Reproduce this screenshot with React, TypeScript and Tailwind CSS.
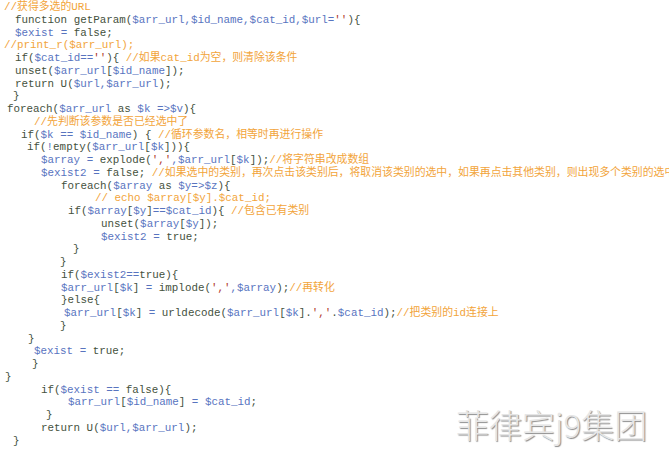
import React from "react";

type Line = { pl: string; text: string };

const lines: Line[] = [
  { pl: "pl-[4px]", text: "//获得多选的URL" },
  { pl: "pl-[15px]", text: "function getParam($arr_url,$id_name,$cat_id,$url=''){" },
  { pl: "pl-[15px]", text: "$exist = false;" },
  { pl: "pl-[4px]", text: "//print_r($arr_url);" },
  { pl: "pl-[15px]", text: "if($cat_id==''){ //如果cat_id为空，则清除该条件" },
  { pl: "pl-[15px]", text: "unset($arr_url[$id_name]);" },
  { pl: "pl-[15px]", text: "return U($url,$arr_url);" },
  { pl: "pl-[13px]", text: "}" },
  { pl: "pl-[7px]", text: "foreach($arr_url as $k =>$v){" },
  { pl: "pl-[34px]", text: "//先判断该参数是否已经选中了" },
  { pl: "pl-[21px]", text: "if($k == $id_name) { //循环参数名，相等时再进行操作" },
  { pl: "pl-[27px]", text: "if(!empty($arr_url[$k])){" },
  { pl: "pl-[41px]", text: "$array = explode(',',$arr_url[$k]);//将字符串改成数组" },
  { pl: "pl-[41px]", text: "$exist2 = false; //如果选中的类别，再次点击该类别后，将取消该类别的选中，如果再点击其他类别，则出现多个类别的选中" },
  { pl: "pl-[61px]", text: "foreach($array as $y=>$z){" },
  { pl: "pl-[95px]", text: "// echo $array[$y].$cat_id;" },
  { pl: "pl-[68px]", text: "if($array[$y]==$cat_id){ //包含已有类别" },
  { pl: "pl-[101px]", text: "unset($array[$y]);" },
  { pl: "pl-[101px]", text: "$exist2 = true;" },
  { pl: "pl-[73px]", text: "}" },
  { pl: "pl-[60px]", text: "}" },
  { pl: "pl-[61px]", text: "if($exist2==true){" },
  { pl: "pl-[61px]", text: "$arr_url[$k] = implode(',',$array);//再转化" },
  { pl: "pl-[61px]", text: "}else{" },
  { pl: "pl-[64px]", text: "$arr_url[$k] = urldecode($arr_url[$k].','.$cat_id);//把类别的id连接上" },
  { pl: "pl-[60px]", text: "}" },
  { pl: "pl-[28px]", text: "}" },
  { pl: "pl-[34px]", text: "$exist = true;" },
  { pl: "pl-[32px]", text: "}" },
  { pl: "pl-[5px]", text: "}" },
  { pl: "pl-[41px]", text: "if($exist == false){" },
  { pl: "pl-[68px]", text: "$arr_url[$id_name] = $cat_id;" },
  { pl: "pl-[46px]", text: "}" },
  { pl: "pl-[41px]", text: "return U($url,$arr_url);" },
  { pl: "pl-[13px]", text: "}" },
];

type Tok = { t: string; k: "dark" | "blue" | "str" | "cmt" };

function tokenize(s: string): Tok[] {
  const out: Tok[] = [];
  let i = 0;
  while (i < s.length) {
    const rest = s.slice(i);
    if (rest.startsWith("//")) {
      out.push({ t: rest, k: "cmt" });
      break;
    }
    const c = s[i];
    if (c === "$") {
      const m = rest.match(/^\$[A-Za-z0-9_]+/);
      if (m) {
        out.push({ t: m[0], k: "blue" });
        i += m[0].length;
        continue;
      }
    }
    if (c === "'") {
      const end = s.indexOf("'", i + 1);
      const str = s.slice(i, end + 1);
      out.push({ t: str, k: "str" });
      i += str.length;
      continue;
    }
    if (c === "=" || c === "," || c === ">" || c === "!") {
      out.push({ t: c, k: "blue" });
      i++;
      continue;
    }
    out.push({ t: c, k: "dark" });
    i++;
  }
  const merged: Tok[] = [];
  for (const tk of out) {
    const last = merged[merged.length - 1];
    if (last && last.k === tk.k) last.t += tk.t;
    else merged.push({ ...tk });
  }
  return merged;
}

const colorClass: Record<Tok["k"], string> = {
  dark: "text-[#44513d]",
  blue: "text-[#5874bf]",
  str: "text-[#b0392c]",
  cmt: "text-[#f2a43a]",
};

export default function App() {
  return (
    <div className="relative w-[669px] h-[453px] overflow-hidden bg-white">
      <div
        className="flex flex-col pt-[1px] text-[10.87px] leading-[12.75px]"
        style={{ fontFamily: '"Liberation Mono", "Noto Sans CJK SC", monospace' }}
      >
        {lines.map((ln, idx) => (
          <div key={idx} className={`h-[12.75px] whitespace-pre ${ln.pl}`}>
            {tokenize(ln.text).map((tk, j) => (
              <span key={j} className={colorClass[tk.k]}>
                {tk.t}
              </span>
            ))}
          </div>
        ))}
      </div>
      <div
        className="absolute left-[456px] top-[402px] text-[33px] leading-[44px] font-light text-[#e6e6e6] [text-shadow:1px_1px_1px_#8a8a8a,-1px_-1px_0_#ffffff]"
        style={{ fontFamily: '"Noto Sans CJK SC", "Noto Sans", sans-serif' }}
      >
        菲律宾j9集团
      </div>
    </div>
  );
}
